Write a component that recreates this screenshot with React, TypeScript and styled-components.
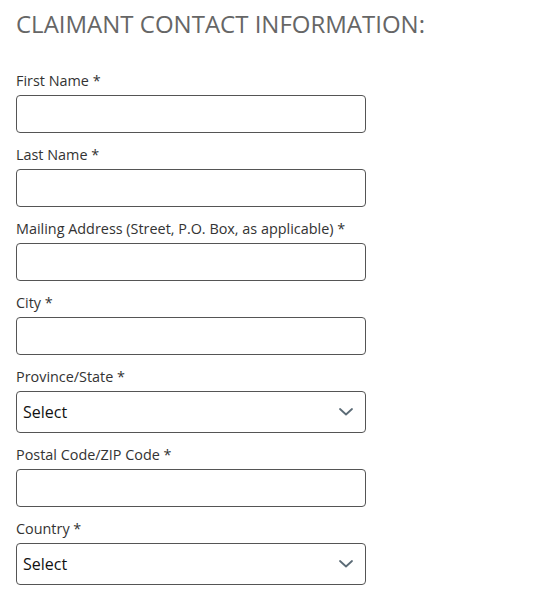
import React from "react";
import styled, { createGlobalStyle } from "styled-components";

const Global = createGlobalStyle`
  html, body { margin: 0; padding: 0; background: #fff; }
  body { font-family: "Open Sans", "Liberation Sans", sans-serif; }
  * { box-sizing: border-box; }
`;

const Page = styled.div`
  padding: 8px 16px 0 16px;
`;

const Title = styled.h2`
  margin: 0 0 31px 0;
  font-size: 24px;
  font-weight: 400;
  line-height: 32px;
  color: #666666;
`;

const Form = styled.form`
  display: flex;
  flex-direction: column;
  gap: 12px;
  width: 350px;
`;

const Field = styled.div`
  display: flex;
  flex-direction: column;
`;

const Label = styled.label`
  font-size: 14.4px;
  line-height: 20px;
  color: #333;
  margin-bottom: 4px;
`;

const Input = styled.input`
  height: 38px;
  width: 100%;
  border: 1px solid #555;
  border-radius: 4px;
  background: #fff;
  font-family: inherit;
  font-size: 16px;
  padding: 0 6px;
`;

const SelectBox = styled.div`
  height: 42px;
  width: 100%;
  border: 1px solid #555;
  border-radius: 4px;
  background: #fff;
  display: flex;
  align-items: center;
  justify-content: space-between;
  padding: 0 12px 0 6px;
`;

const SelectText = styled.span`
  font-size: 16px;
  color: #111;
`;

const Chevron = () => (
  <svg width="14" height="8" viewBox="0 0 14 8" fill="none">
    <path d="M1 1l6 5.5L13 1" stroke="#5b6b76" strokeWidth="1.8" strokeLinecap="round" strokeLinejoin="round" />
  </svg>
);

const TextField = ({ label }: { label: string }) => (
  <Field>
    <Label>{label}</Label>
    <Input type="text" />
  </Field>
);

const SelectField = ({ label }: { label: string }) => (
  <Field>
    <Label>{label}</Label>
    <SelectBox>
      <SelectText>Select</SelectText>
      <Chevron />
    </SelectBox>
  </Field>
);

export default function App() {
  return (
    <Page>
      <Global />
      <Title>CLAIMANT CONTACT INFORMATION:</Title>
      <Form>
        <TextField label="First Name *" />
        <TextField label="Last Name *" />
        <TextField label="Mailing Address (Street, P.O. Box, as applicable) *" />
        <TextField label="City *" />
        <SelectField label="Province/State *" />
        <TextField label="Postal Code/ZIP Code *" />
        <SelectField label="Country *" />
      </Form>
    </Page>
  );
}
